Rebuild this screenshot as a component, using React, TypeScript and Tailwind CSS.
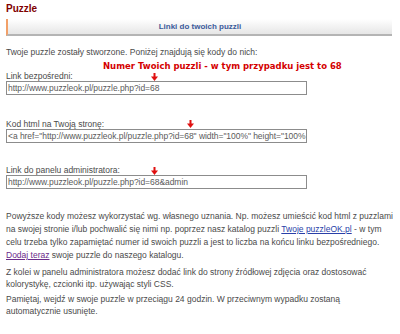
import React from "react";

const FONT = "font-['Liberation_Sans',Arial,sans-serif]";

function Arrow({ className }: { className: string }) {
  return (
    <svg
      className={`absolute ${className}`}
      width="7"
      height="8"
      viewBox="0 0 7 8"
    >
      <rect x="2.5" y="0" width="2" height="4" fill="#e01010" />
      <polygon points="0,3.5 7,3.5 3.5,8" fill="#e01010" />
    </svg>
  );
}

type FieldProps = {
  label: string;
  value: string;
  arrowClass: string;
  className?: string;
};

function CodeField({ label, value, arrowClass, className }: FieldProps) {
  return (
    <div className={`relative ${className ?? ""}`}>
      <div className="leading-[10px]">{label}</div>
      <Arrow className={arrowClass} />
      <div className="h-[14px] w-[301px] overflow-hidden whitespace-nowrap border border-[#8c8c8c] bg-white pl-[1px] text-[8.5px] leading-[12px] tracking-[-0.05px] text-[#5a5a5a]">
        {value}
      </div>
    </div>
  );
}

export default function App() {
  return (
    <div
      className={`h-[334px] w-[400px] overflow-hidden bg-white px-[6px] text-[8.5px] text-[#4a4a4a] ${FONT}`}
    >
      <h1 className="h-[19px] text-[10px] font-bold leading-[17px] text-[#800000]">
        Puzzle
      </h1>
      <div className="h-[17px] w-[386px] border-b-2 border-l-2 border-b-[#b4b4b4] border-l-[#f2a068] bg-gradient-to-b from-white to-[#e6e6e6] text-center text-[8px] font-bold leading-[16px] text-[#3b5a9a]">
        Linki do twoich puzzli
      </div>
      <p className="mt-[9px] leading-[14px]">
        Twoje puzzle zostały stworzone. Poniżej znajdują się kody do nich:
      </p>
      <div className="mt-[2px] pl-[97px] font-['DejaVu_Sans',sans-serif] text-[8.5px] font-bold leading-[10px] text-[#d40000]">
        Numer Twoich puzzli - w tym przypadku jest to 68
      </div>
      <CodeField
        label="Link bezpośredni:"
        value="http://www.puzzleok.pl/puzzle.php?id=68"
        arrowClass="left-[145px] top-[2px]"
      />
      <CodeField
        className="mt-[24px]"
        label="Kod html na Twoją stronę:"
        value={'<a href="http://www.puzzleok.pl/puzzle.php?id=68" width="100%" height="100%'}
        arrowClass="left-[181px] top-[1px]"
      />
      <CodeField
        className="mt-[22px]"
        label="Link do panelu administratora:"
        value="http://www.puzzleok.pl/puzzle.php?id=68&admin"
        arrowClass="left-[145px] top-[2px]"
      />
      <p className="mt-[21px] w-[392px] leading-[13px]">
        Powyższe kody możesz wykorzystać wg. własnego uznania. Np. możesz umieścić kod html z puzzlami
        <br />
        na swojej stronie i/lub pochwalić się nimi np. poprzez nasz katalog puzzli{" "}
        <a href="#" className="text-[#2a3fa8] underline">
          Twoje puzzleOK.pl
        </a>{" "}
        - w tym
        <br />
        celu trzeba tylko zapamiętać numer id swoich puzzli a jest to liczba na końcu linku bezpośredniego.
        <br />
        <a href="#" className="text-[#6a2a8a] underline">
          Dodaj teraz
        </a>{" "}
        swoje puzzle do naszego katalogu.
      </p>
      <p className="mt-[4px] leading-[12px]">
        Z kolei w panelu administratora możesz dodać link do strony źródłowej zdjęcia oraz dostosować
        <br />
        kolorystykę, czcionki itp. używając styli CSS.
      </p>
      <p className="mt-[3px] leading-[12px]">
        Pamiętaj, wejdź w swoje puzzle w przeciągu 24 godzin. W przeciwnym wypadku zostaną
        <br />
        automatycznie usunięte.
      </p>
    </div>
  );
}
